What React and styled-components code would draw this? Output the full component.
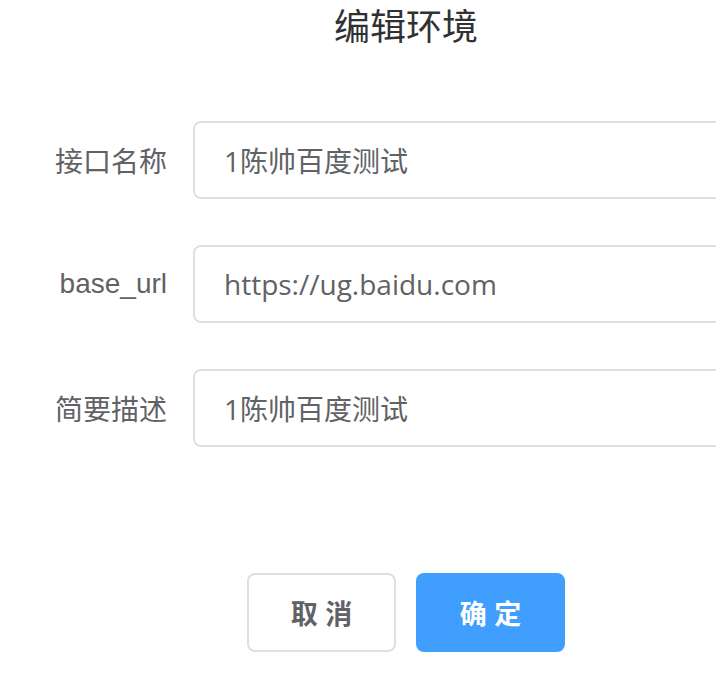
import styled, { createGlobalStyle } from 'styled-components';

const GlobalStyle = createGlobalStyle`
  html, body {
    margin: 0;
    padding: 0;
    background: #ffffff;
    overflow: hidden;
  }
  body {
    font-family: "Liberation Sans", "Noto Sans CJK SC", sans-serif;
  }
`;

/* a janela corta o diálogo, que é mais largo que a tela */
const Pagina = styled.div`
  width: 100vw;
  height: 100vh;
  overflow: hidden;
`;

const Dialog = styled.div`
  width: 812px;
  box-sizing: border-box;
  background: #ffffff;
`;

const Titulo = styled.h2`
  margin: 0;
  height: 54px;
  line-height: 56px;
  text-align: center;
  font-size: 36px;
  font-weight: 400;
  color: #303133;
`;

const Formulario = styled.form`
  margin-top: 67px;
  display: flex;
  flex-direction: column;
  gap: 46px;
`;

const Linha = styled.div`
  display: flex;
  align-items: center;
`;

const Rotulo = styled.label`
  width: 193px;
  flex-shrink: 0;
  box-sizing: border-box;
  padding-right: 26px;
  text-align: right;
  font-size: 28px;
  color: #606266;
`;

const Campo = styled.input`
  width: 580px;
  height: 78px;
  box-sizing: border-box;
  border: 2px solid #dcdfe6;
  border-radius: 8px;
  padding: 0 30px 0 29px;
  font-family: "Open Sans", "Noto Sans CJK SC", sans-serif;
  font-size: 28px;
  color: #606266;
  outline: none;
  background: #ffffff;
`;

const Rodape = styled.div`
  margin-top: 126px;
  display: flex;
  justify-content: center;
  gap: 20px;
`;

const Botao = styled.button`
  width: 149px;
  height: 79px;
  box-sizing: border-box;
  border-radius: 8px;
  border: 2px solid ${p => (p.$primario ? '#409eff' : '#dcdfe6')};
  background: ${p => (p.$primario ? '#409eff' : '#ffffff')};
  color: ${p => (p.$primario ? '#ffffff' : '#606266')};
  font-family: "Liberation Sans", "Noto Sans CJK SC", sans-serif;
  font-size: 27px;
  font-weight: 700;
  white-space: pre;
  cursor: pointer;
`;

const campos = [
  { rotulo: '接口名称', valor: '1陈帅百度测试' },
  { rotulo: 'base_url', valor: 'https://ug.baidu.com' },
  { rotulo: '简要描述', valor: '1陈帅百度测试' },
];

const App = () => {
  return (
    <Pagina>
      <GlobalStyle />
      <Dialog>
        <Titulo>编辑环境</Titulo>
        <Formulario onSubmit={e => e.preventDefault()}>
          {campos.map(c => (
            <Linha key={c.rotulo}>
              <Rotulo>{c.rotulo}</Rotulo>
              <Campo defaultValue={c.valor} />
            </Linha>
          ))}
        </Formulario>
        <Rodape>
          <Botao type="button">取 消</Botao>
          <Botao type="button" $primario>确 定</Botao>
        </Rodape>
      </Dialog>
    </Pagina>
  );
};

export default App;
